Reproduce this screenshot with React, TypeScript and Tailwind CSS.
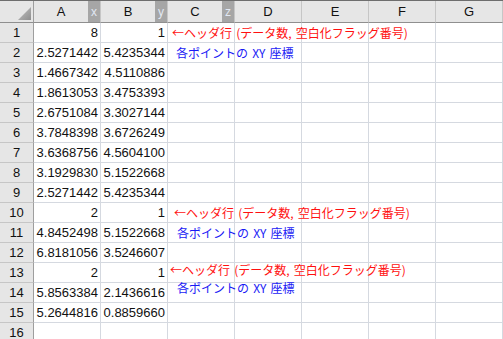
import React from "react";

const cols = ["A", "B", "C", "D", "E", "F", "G"];
const axis: Record<string, string> = { A: "x", B: "y", C: "z" };

const rows: [string, string][] = [
  ["8", "1"],
  ["2.5271442", "5.4235344"],
  ["1.4667342", "4.5110886"],
  ["1.8613053", "3.4753393"],
  ["2.6751084", "3.3027144"],
  ["3.7848398", "3.6726249"],
  ["3.6368756", "4.5604100"],
  ["3.1929830", "5.1522668"],
  ["2.5271442", "5.4235344"],
  ["2", "1"],
  ["4.8452498", "5.1522668"],
  ["6.8181056", "3.5246607"],
  ["2", "1"],
  ["5.8563384", "2.1436616"],
  ["5.2644816", "0.8859660"],
  ["", ""],
];

// floating text boxes laid over the sheet
const notes = [
  { text: "←ヘッダ行 (データ数, 空白化フラッグ番号)", red: true, cls: "left-[172px] top-[25px]" },
  { text: "各ポイントの XY 座標", red: false, cls: "left-[176px] top-[45px]" },
  { text: "←ヘッダ行 (データ数, 空白化フラッグ番号)", red: true, cls: "left-[174px] top-[205px]" },
  { text: "各ポイントの XY 座標", red: false, cls: "left-[177px] top-[225px]" },
  { text: "←ヘッダ行 (データ数, 空白化フラッグ番号)", red: true, cls: "left-[170px] top-[262px]" },
  { text: "各ポイントの XY 座標", red: false, cls: "left-[177px] top-[280px]" },
];

function Corner() {
  return (
    <div className="bg-[#e6e6e6] border-r border-b border-r-[#9e9e9e] border-b-[#8f8f8f] relative">
      <svg width="33" height="21" className="absolute left-0 top-0">
        <defs>
          <linearGradient id="tri" x1="0" y1="0" x2="1" y2="1">
            <stop offset="0" stopColor="#c4c4c4" />
            <stop offset="1" stopColor="#8e8e8e" />
          </linearGradient>
        </defs>
        <polygon points="31,6 31,19 18,19" fill="url(#tri)" />
      </svg>
    </div>
  );
}

export default function App() {
  return (
    <div className="w-[503px] h-[339px] overflow-hidden bg-white relative font-['Liberation_Sans',Arial,sans-serif]">
      <div className="border-t border-[#6e6e6e] grid grid-cols-[34px_repeat(7,67px)] grid-rows-[22px_repeat(16,20px)] text-[13px] text-[#111]">
        <Corner />
        {cols.map((c) => (
          <div
            key={c}
            className="bg-[#e6e6e6] border-r border-b border-r-[#c6c6c6] border-b-[#8f8f8f] flex"
          >
            <div className="flex-1 flex items-center justify-center">{c}</div>
            {axis[c] && (
              <div className="w-[12px] bg-[#a6a6a6] text-[#e2e8f3] text-[12px] flex items-center justify-center">
                {axis[c]}
              </div>
            )}
          </div>
        ))}
        {rows.map((r, i) => (
          <React.Fragment key={i}>
            <div className="bg-[#e6e6e6] border-r border-b border-r-[#9e9e9e] border-b-[#c6c6c6] flex items-center justify-center">
              {i + 1}
            </div>
            <div className="border-r border-b border-[#d5d9e0] flex items-center justify-end pr-[2px]">
              {r[0]}
            </div>
            <div className="border-r border-b border-[#d5d9e0] flex items-center justify-end pr-[2px]">
              {r[1]}
            </div>
            {cols.slice(2).map((c) => (
              <div key={c} className="border-r border-b border-[#d5d9e0]" />
            ))}
          </React.Fragment>
        ))}
      </div>
      {notes.map((n, i) => (
        <div
          key={i}
          className={`absolute whitespace-nowrap text-[12px] leading-[16px] [word-spacing:1.5px] font-['Noto_Sans_CJK_JP',sans-serif] ${n.red ? "text-[#ff1010]" : "text-[#1a1af5]"} ${n.cls}`}
        >
          {n.text}
        </div>
      ))}
    </div>
  );
}
